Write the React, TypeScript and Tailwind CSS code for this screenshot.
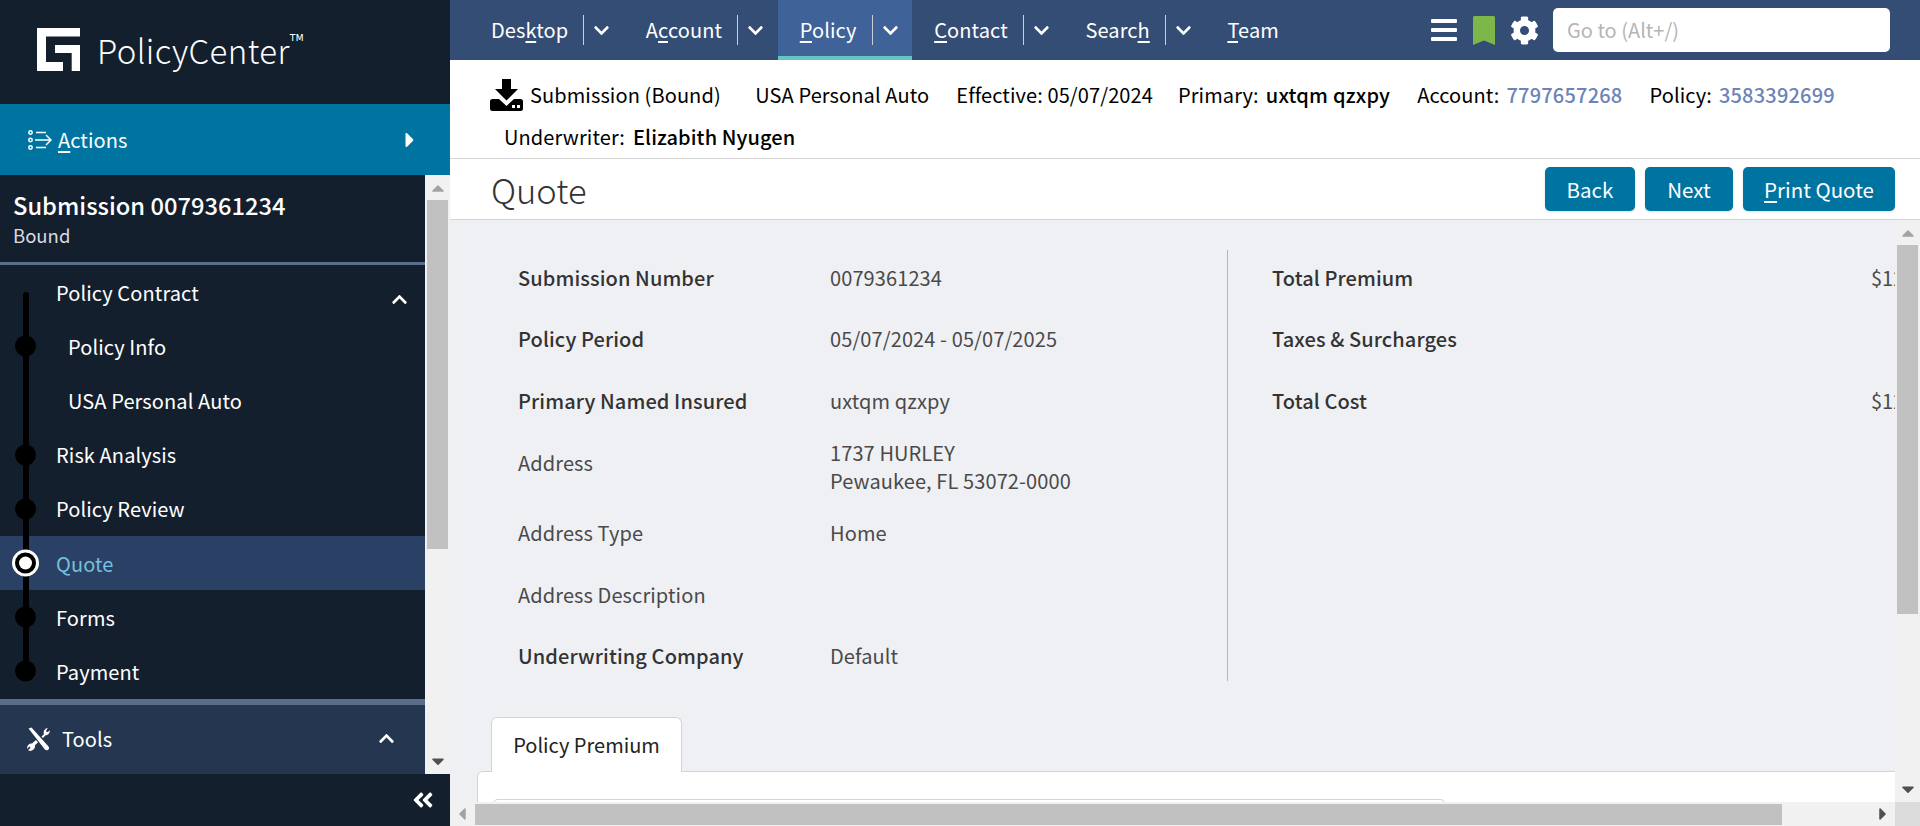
import React from "react";
import { FaChevronUp, FaChevronDown, FaCaretRight, FaCaretUp, FaCaretDown, FaCaretLeft, FaCog, FaAngleDoubleLeft } from "react-icons/fa";

const U = ({ children }: { children: React.ReactNode }) => <span className="underline underline-offset-[3px] decoration-[1.5px]">{children}</span>;

function NavItem({ pre, u, post, active, last }: { pre?: string; u: string; post?: string; active?: boolean; last?: boolean }) {
  return (
    <div className={`flex h-[60px] items-center pl-[22px] ${active ? "bg-[#3f6298] border-b-[4px] border-[#66c5c0]" : ""}`}>
      <span className={`text-[20px] leading-[26px] tracking-[0.1px] text-white ${active ? "mt-[4px]" : ""}`}>
        {pre}<U>{u}</U>{post}
      </span>
      {!last && (
        <>
          <div className={`ml-[15px] h-[30px] w-px bg-[#c9ced8] ${active ? "mt-[4px]" : ""}`} />
          <div className={`flex w-[39.6px] pl-[9px] text-white ${active ? "mt-[4px]" : ""}`}>
            <FaChevronDown className="h-[17px] w-[17px]" />
          </div>
        </>
      )}
    </div>
  );
}

function Dot() {
  return <div className="absolute left-[15px] top-1/2 z-20 h-[21px] w-[21px] -translate-y-1/2 rounded-full bg-black" />;
}

function Step({ label, sub, dot, active, chevron }: { label: string; sub?: boolean; dot?: boolean; active?: boolean; chevron?: boolean }) {
  return (
    <div className={`relative flex h-[54.2px] items-center ${sub ? "pl-[68px]" : "pl-[56px]"} ${active ? "bg-[#2a4065]" : ""}`}>
      {dot && <Dot />}
      {active && (
        <div className="absolute left-[12px] top-1/2 z-20 flex h-[27px] w-[27px] -translate-y-1/2 items-center justify-center rounded-full bg-white">
          <div className="flex h-[21px] w-[21px] items-center justify-center rounded-full bg-black">
            <div className="h-[13px] w-[13px] rounded-full bg-white" />
          </div>
        </div>
      )}
      <span className={`mt-[1px] text-[20px] leading-[26px] tracking-[0.1px] ${active ? "text-[#74c0dd]" : "text-white"}`}>{label}</span>
      {chevron && <FaChevronUp className="absolute left-[391px] top-[26px] h-[17px] w-[17px] text-white" />}
    </div>
  );
}

function Row({ label, value, strong, h = "h-[61.5px]", labelUp }: { label: string; value?: React.ReactNode; strong?: boolean; h?: string; labelUp?: boolean }) {
  return (
    <div className={`flex items-center ${h}`}>
      <div className={`w-[312px] shrink-0 text-[20px] leading-[28px] tracking-[0.1px] ${strong ? "font-medium text-[#333]" : "text-[#4a4a4a]"} ${labelUp ? "pb-[8px]" : ""}`}>{label}</div>
      <div className="text-[20px] leading-[28px] tracking-[0.1px] text-[#4a4a4a]">{value}</div>
    </div>
  );
}

function CostRow({ label, value }: { label: string; value?: string }) {
  return (
    <div className="flex h-[61.5px] items-center">
      <div className="w-[599px] shrink-0 text-[20px] leading-[28px] tracking-[0.1px] font-medium text-[#333]">{label}</div>
      <div className="whitespace-nowrap text-[20px] leading-[28px] text-[#4a4a4a]">{value}</div>
    </div>
  );
}

function Btn({ children, w }: { children: React.ReactNode; w: string }) {
  return (
    <button className={`flex h-[44px] ${w} items-center justify-center rounded-[5px] bg-[#0074a1] text-[20.5px] leading-[26px] text-white shadow-sm`}>
      {children}
    </button>
  );
}

export default function App() {
  return (
    <div className="flex h-screen w-full overflow-hidden bg-white font-['Noto_Sans_CJK_SC','Liberation_Sans',sans-serif]">
      {/* Sidebar */}
      <aside className="flex h-full w-[450px] shrink-0 flex-col bg-[#141f2e]">
        <div className="flex h-[104px] shrink-0 items-start pl-[37px] pt-[28px]">
          <svg width="43" height="43" viewBox="0 0 43 43" fill="#fff">
            <path d="M0 0H43V8.500H9V34H26V43H0Z" />
            <path d="M18 17H43V43H34.700V25H18Z" />
          </svg>
          <span className="ml-[17px] mt-[3px] text-[33px] font-light leading-[38px] tracking-[0.4px] text-white">
            PolicyCenter<sup className="relative -top-[3px] align-super text-[20px] leading-none">™</sup>
          </span>
        </div>
        <div className="flex h-[71px] shrink-0 items-center justify-between bg-[#0074a1] pl-[28px] pr-[34px] text-white">
          <div className="flex items-center">
            <svg width="24" height="20" viewBox="0 0 24 20" fill="none" stroke="#fff" strokeWidth="1.500">
              <circle cx="2.500" cy="2.500" r="1.700" />
              <circle cx="2.500" cy="10" r="1.700" />
              <circle cx="2.500" cy="17.500" r="1.700" />
              <path d="M8 2.500H18M7 10H23M18 5L23 10L18 15M8 17.500H18" />
            </svg>
            <span className="ml-[6px] text-[20px] leading-[26px] tracking-[0.1px]"><U>A</U>ctions</span>
          </div>
          <FaCaretRight className="h-[24px] w-[12px]" />
        </div>
        <div className="flex min-h-0 flex-1">
          <div className="relative flex w-[425px] shrink-0 flex-col overflow-hidden">
            <div className="h-[87px] shrink-0 pl-[13px] pt-[15px]">
              <div className="text-[23.7px] font-medium leading-[30px] text-white">Submission 0079361234</div>
              <div className="text-[18.5px] leading-[30px] text-[#d8dbe0]">Bound</div>
            </div>
            <div className="h-[3px] shrink-0 bg-[#5a6e8a]" />
            <div className="relative flex flex-col">
              <div className="absolute left-[23px] top-[27px] z-10 h-[380px] w-[6px] rounded-t-full bg-black" />
              <Step label="Policy Contract" chevron />
              <Step label="Policy Info" sub dot />
              <Step label="USA Personal Auto" sub />
              <Step label="Risk Analysis" dot />
              <Step label="Policy Review" dot />
              <Step label="Quote" active />
              <Step label="Forms" dot />
              <Step label="Payment" dot />
            </div>
            <div className="h-[6px] shrink-0 bg-[#5a6e8a]" />
            <div className="flex h-[70px] shrink-0 items-center justify-between bg-[#243650] pb-[2px] pl-[27px] pr-[30px] text-white">
              <div className="flex items-center">
                <svg width="23" height="24" viewBox="0 0 23 24" fill="#fff">
                  <path d="M1.500 1.500L4.500 0.500L21.500 19.500C22.500 20.800 22.200 22.300 21 23C19.800 23.700 18.500 23.300 17.700 22.200Z" />
                  <path d="M14.500 9.500L17 7.200C16 4.500 17.500 1.800 20.800 0.800L19 4L20.200 5.200L23 3.500C22.800 6.800 20.200 8.600 18.500 8.200L16 11Z" />
                  <path d="M9 13L11 15.300L8 18.300C8.500 20.800 6.500 23.500 3.500 24L1 23.300L3.600 20.800L2.500 19.500L0.200 21.800C-0.300 19 2 16.300 5 16.500Z" />
                </svg>
                <span className="ml-[12px] text-[20px] leading-[26px] tracking-[0.1px]">Tools</span>
              </div>
              <FaChevronUp className="h-[17px] w-[17px]" />
            </div>
          </div>
          <div className="flex w-[25px] shrink-0 flex-col items-center bg-[#f1f1f1]">
            <FaCaretUp className="mt-[3px] h-[20px] w-[14px] text-[#a3a3a3]" />
            <div className="mt-[2px] h-[349px] w-[21px] bg-[#c1c1c1]" />
            <div className="flex-1" />
            <FaCaretDown className="mb-[3px] h-[20px] w-[14px] text-[#505050]" />
          </div>
        </div>
        <div className="flex h-[52px] shrink-0 items-center justify-end pr-[15px] text-white">
          <FaAngleDoubleLeft className="h-[24px] w-[24px]" />
        </div>
      </aside>

      {/* Main */}
      <main className="flex min-w-0 flex-1 flex-col">
        <nav className="flex h-[60px] shrink-0 items-center bg-[#344d74] pl-[19px] pr-[30px]">
          <NavItem pre="Des" u="k" post="top" />
          <NavItem pre="A" u="c" post="count" />
          <NavItem u="P" post="olicy" active />
          <NavItem u="C" post="ontact" />
          <NavItem pre="Searc" u="h" />
          <NavItem u="T" post="eam" last />
          <div className="flex-1" />
          <div className="flex w-[26px] flex-col gap-[5px]">
            <div className="h-[4px] rounded-[1px] bg-white" />
            <div className="h-[4px] rounded-[1px] bg-white" />
            <div className="h-[4px] rounded-[1px] bg-white" />
          </div>
          <svg className="ml-[16px]" width="22" height="29" viewBox="0 0 22 29" fill="#7db749">
            <path d="M0 1.500Q0 0 1.500 0H20.500Q22 0 22 1.500V29L11 24.500L0 29Z" />
          </svg>
          <FaCog className="ml-[15px] h-[29px] w-[29px] text-white" />
          <div className="ml-[14px] flex h-[44px] w-[337px] items-center rounded-[5px] bg-white pl-[14px] text-[20px] leading-[26px] text-[#b5b5b5]">
            Go to (Alt+/)
          </div>
        </nav>

        <div className="h-[99px] shrink-0 border-b border-[#d4d4d4] text-[20px] leading-[26px] tracking-[0.1px] text-black">
          <div className="flex h-[64px] items-center pl-[40px] pt-[6px]">
            <svg width="33" height="32" viewBox="0 0 33 32" fill="#000">
              <path d="M12 0H21V10H28L16.500 21.500L5 10H12Z" />
              <path d="M0 22.500Q0 20 2.500 20H9L16.500 27L24 20H30.500Q33 20 33 22.500V30Q33 32 30.500 32H2.500Q0 32 0 30Z" />
              <rect x="22" y="26" width="3" height="3" fill="#fff" />
              <rect x="27" y="26" width="3" height="3" fill="#fff" />
            </svg>
            <span className="ml-[7px]">Submission (Bound)</span>
            <span className="ml-[34.5px]">USA Personal Auto</span>
            <span className="ml-[27px]">Effective: 05/07/2024</span>
            <span className="ml-[25px]">Primary:</span>
            <span className="ml-[7px] font-medium tracking-[0.2px]">uxtqm qzxpy</span>
            <span className="ml-[27px]">Account:</span>
            <span className="ml-[7px] font-medium tracking-[0.2px] text-[#6c84b8]">7797657268</span>
            <span className="ml-[27px]">Policy:</span>
            <span className="ml-[7px] font-medium tracking-[0.2px] text-[#6c84b8]">3583392699</span>
          </div>
          <div className="flex pl-[54px]">
            <span>Underwriter:</span>
            <span className="ml-[8px] font-medium">Elizabith Nyugen</span>
          </div>
        </div>

        <div className="flex h-[61px] shrink-0 items-center border-b border-[#d4d4d4] pl-[41px] pr-[25px]">
          <h1 className="text-[34.5px] font-light leading-[44px] text-[#333]">Quote</h1>
          <div className="flex-1" />
          <div className="flex gap-[10px]">
            <Btn w="w-[90px]">Back</Btn>
            <Btn w="w-[88px]">Next</Btn>
            <Btn w="w-[152px]"><U>P</U>rint Quote</Btn>
          </div>
        </div>

        <div className="flex min-h-0 flex-1">
          <div className="relative min-w-0 flex-1 overflow-hidden bg-[#eff0f4]">
            <div className="flex pt-[27px]">
              <div className="w-[777px] shrink-0 pl-[68px]">
                <Row label="Submission Number" value="0079361234" strong />
                <Row label="Policy Period" value="05/07/2024 - 05/07/2025" strong />
                <Row label="Primary Named Insured" value="uxtqm qzxpy" strong />
                <Row
                  label="Address"
                  h="h-[71px]"
                  labelUp
                  value={<>1737 HURLEY<br />Pewaukee, FL 53072-0000</>}
                />
                <Row label="Address Type" value="Home" />
                <Row label="Address Description" />
                <Row label="Underwriting Company" value="Default" strong />
              </div>
              <div className="mt-[3px] h-[431px] w-px shrink-0 bg-[#b5b5b5]" />
              <div className="shrink-0 pl-[44px]">
                <CostRow label="Total Premium" value="$123.00" />
                <CostRow label="Taxes & Surcharges" />
                <CostRow label="Total Cost" value="$123.00" />
              </div>
            </div>
            <div className="ml-[41px] mt-[30px] flex h-[55px] w-[191px] items-center justify-center rounded-t-[6px] border border-b-0 border-[#d4d4d4] bg-white text-[20px] leading-[26px] text-[#222] relative z-10">
              Policy Premium
            </div>
            <div className="-mt-px ml-[27px] h-[60px] w-[1500px] rounded-tl-[6px] border border-[#d4d4d4] bg-white pl-[14px] pt-[27px]">
              <div className="h-[40px] w-[954px] rounded-t-[6px] border border-[#d4d4d4]" />
            </div>
          </div>
          <div className="flex w-[25px] shrink-0 flex-col items-center bg-[#f1f1f1]">
            <FaCaretUp className="mt-[3px] h-[20px] w-[14px] text-[#a3a3a3]" />
            <div className="mt-[2px] h-[369px] w-[21px] bg-[#c1c1c1]" />
            <div className="flex-1" />
            <FaCaretDown className="mb-[3px] h-[20px] w-[14px] text-[#505050]" />
          </div>
        </div>

        <div className="flex h-[24px] shrink-0 items-center bg-[#f1f1f1]">
          <FaCaretLeft className="ml-[5px] h-[20px] w-[14px] text-[#a3a3a3]" />
          <div className="ml-[6px] h-[21px] w-[1307px] bg-[#c1c1c1]" />
          <div className="flex-1" />
          <FaCaretRight className="mr-[5px] h-[20px] w-[14px] text-[#505050]" />
          <div className="h-full w-[25px] bg-[#dcdcdc]" />
        </div>
      </main>
    </div>
  );
}
